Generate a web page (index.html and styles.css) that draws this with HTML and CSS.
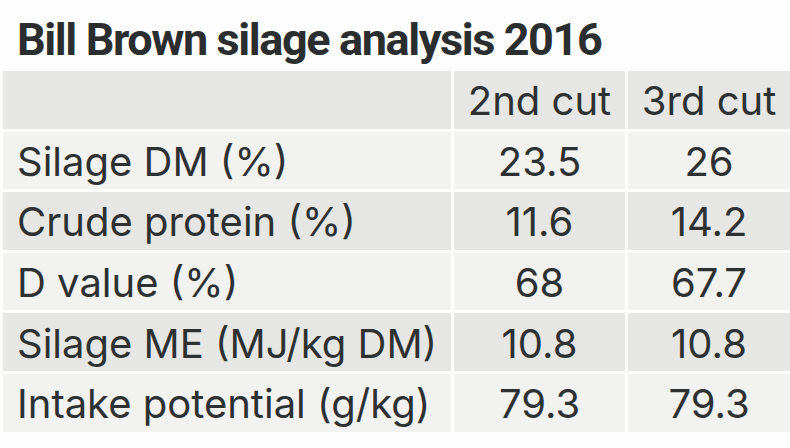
FILE: index.html
```html
<!DOCTYPE html>
<html>
<head>
<meta charset="utf-8">
<link rel="stylesheet" href="styles.css">
</head>
<body>
<div class="wrap">
  <h1 class="title">Bill Brown silage analysis 2016</h1>
  <div class="table">
    <div class="cell dark"></div>
    <div class="cell dark num">2nd cut</div>
    <div class="cell dark num">3rd cut</div>

    <div class="cell light label">Silage DM (%)</div>
    <div class="cell light num">23.5</div>
    <div class="cell light num">26</div>

    <div class="cell dark label">Crude protein (%)</div>
    <div class="cell dark num">11.6</div>
    <div class="cell dark num">14.2</div>

    <div class="cell light label">D value (%)</div>
    <div class="cell light num">68</div>
    <div class="cell light num">67.7</div>

    <div class="cell dark label">Silage ME (MJ/kg DM)</div>
    <div class="cell dark num">10.8</div>
    <div class="cell dark num">10.8</div>

    <div class="cell light label">Intake potential (g/kg)</div>
    <div class="cell light num">79.3</div>
    <div class="cell light num">79.3</div>
  </div>
</div>
</body>
</html>
```
FILE: styles.css
```css
html, body {
  margin: 0;
  padding: 0;
  background: #fdfdfd;
}
body {
  width: 790px;
  height: 448px;
  overflow: hidden;
  color: #2e3132;
}
.wrap {
  padding: 0 1px 0 3px;
}
.title {
  margin: 0;
  padding: 15px 0 0 14px;
  height: 71px;
  box-sizing: border-box;
  font-family: "Roboto", sans-serif;
  font-weight: bold;
  font-size: 45px;
  line-height: 50px;
  letter-spacing: -1.4px;
  color: #2b2e2f;
}
.table {
  display: grid;
  grid-template-columns: 448px 171px 162px;
  grid-auto-rows: 57.6px;
  column-gap: 3px;
  row-gap: 3px;
}
.cell {
  display: flex;
  align-items: center;
  padding-top: 2px;
  box-sizing: border-box;
  font-family: "Inter", sans-serif;
  font-size: 40px;
  color: #2e3132;
}
.dark { background: #e6e7e4; }
.light { background: #f2f2f1; }
.label { padding-left: 14px; }
.num { justify-content: center; }
```
